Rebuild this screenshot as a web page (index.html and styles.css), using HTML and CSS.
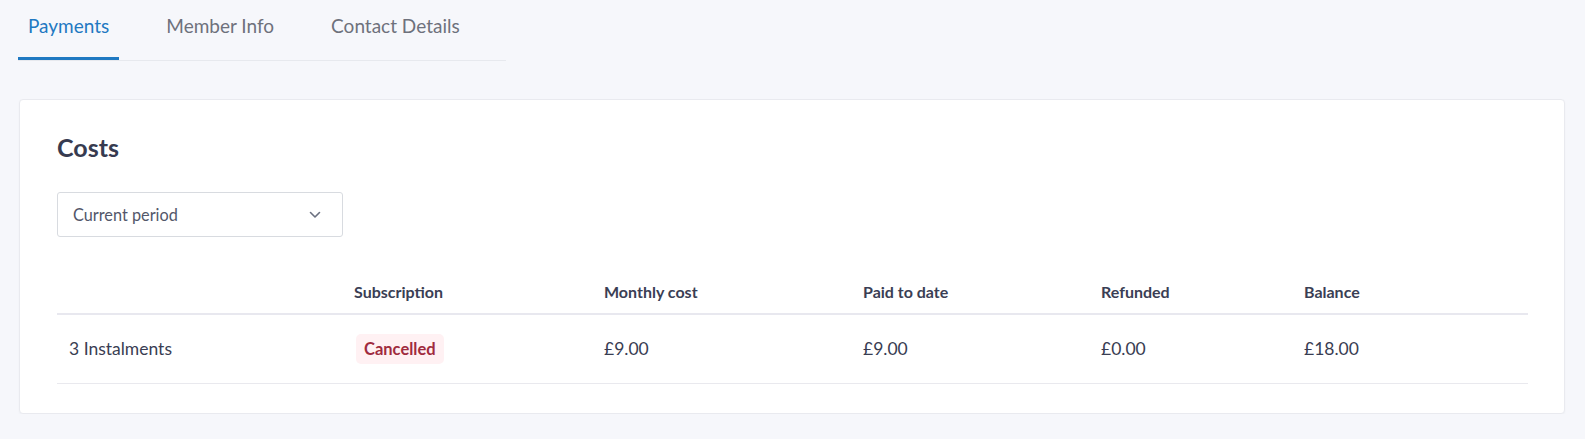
FILE: index.html
```html
<!DOCTYPE html>
<html lang="en">
<head>
<meta charset="utf-8">
<title>Payments</title>
<link rel="stylesheet" href="styles.css">
</head>
<body>
<nav class="tabs">
  <a class="tab active">Payments</a>
  <a class="tab">Member Info</a>
  <a class="tab">Contact Details</a>
</nav>
<section class="card">
  <h2 class="title">Costs</h2>
  <div class="select">
    <span class="select-label">Current period</span>
    <svg class="chevron" width="12" height="8" viewBox="0 0 12 8"><path d="M1.5 1.5 L6 6 L10.5 1.5" fill="none" stroke="#6b7080" stroke-width="1.6" stroke-linecap="round" stroke-linejoin="round"/></svg>
  </div>
  <div class="table">
    <div class="row head">
      <div class="cell"></div>
      <div class="cell">Subscription</div>
      <div class="cell">Monthly cost</div>
      <div class="cell">Paid to date</div>
      <div class="cell">Refunded</div>
      <div class="cell">Balance</div>
    </div>
    <div class="row body">
      <div class="cell">3 Instalments</div>
      <div class="cell"><span class="badge">Cancelled</span></div>
      <div class="cell">£9.00</div>
      <div class="cell">£9.00</div>
      <div class="cell">£0.00</div>
      <div class="cell">£18.00</div>
    </div>
  </div>
</section>
</body>
</html>
```
FILE: styles.css
```css
* { box-sizing: border-box; }
html, body { margin: 0; padding: 0; }
body {
  background: #f6f7fb;
  font-family: Lato, "Open Sans", Arial, sans-serif;
  color: #393d52;
  padding: 0 20px 0 19px;
}
.tabs {
  display: flex;
  gap: 37px;
  width: 488px;
  height: 61px;
  border-bottom: 1px solid #e7e9ee;
  margin-left: -1px;
}
.tab {
  display: block;
  height: 60px;
  padding: 14px 10px 0;
  font-size: 19px;
  line-height: 24px;
  color: #6e717c;
  border-bottom: 3px solid transparent;
}
.tab.active {
  color: #1f79c2;
  border-bottom-color: #1f79c2;
}
.card {
  margin-top: 38px;
  background: #fff;
  border: 1px solid #e9eaef;
  border-radius: 4px;
  box-shadow: 0 1px 2px rgba(30, 40, 70, 0.04);
  padding: 32px 36px 29px 37px;
}
.title {
  margin: 0;
  font-size: 25px;
  line-height: 30px;
  font-weight: 700;
  color: #373b50;
}
.select {
  margin-top: 30px;
  width: 286px;
  height: 45px;
  border: 1px solid #d8dbe0;
  border-radius: 3px;
  display: flex;
  align-items: center;
  justify-content: space-between;
  padding: 0 21px 0 15px;
}
.select-label {
  font-size: 16.3px;
  line-height: 43px;
  color: #53576a;
}
.chevron { display: block; }
.table { margin-top: 32px; }
.row {
  display: grid;
  grid-template-columns: 285px 250px 259px 238px 203px 1fr;
}
.cell { padding-left: 12px; }
.head {
  border-bottom: 2px solid #e8e8ef;
}
.head .cell {
  padding-top: 13px;
  padding-bottom: 11px;
  font-size: 16px;
  line-height: 20px;
  font-weight: 700;
  color: #3a3e54;
}
.body {
  height: 69px;
  align-items: center;
  border-bottom: 1px solid #e9e9ee;
}
.body .cell {
  font-size: 17.5px;
  line-height: 24px;
  color: #393d52;
}
.badge {
  display: inline-block;
  margin-left: 2px;
  height: 30px;
  padding: 0 8px;
  border-radius: 5px;
  background: #fff1f3;
  color: #a02b3e;
  font-size: 16.5px;
  line-height: 30px;
  font-weight: 700;
  vertical-align: middle;
}
```
